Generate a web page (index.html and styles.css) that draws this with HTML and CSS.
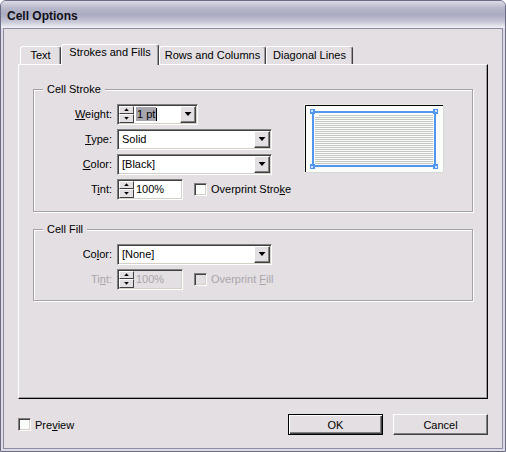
FILE: index.html
```html
<!DOCTYPE html>
<html lang="en">
<head>
    <meta charset="UTF-8">
    <title>Cell Options</title>
    <link rel="stylesheet" href="styles.css">
</head>
<body>
    <div class="window">
        <div class="titlebar">Cell Options</div>
        <div class="frame">
            <div class="client">
                <div class="tabs">
                    <div class="tab tab-text">Text</div>
                    <div class="tab tab-strokes active">Strokes and Fills</div>
                    <div class="tab tab-rows">Rows and Columns</div>
                    <div class="tab tab-diagonal">Diagonal Lines</div>
                </div>

                <div class="panel">
                    <!-- Cell Stroke -->
                    <div class="group stroke">
                        <span class="group-title">Cell Stroke</span>
                        <div class="fields">
                            <div class="row">
                                <span class="lbl"><u>W</u>eight:</span>
                                <div class="numfield combo">
                                    <div class="spin">
                                        <div class="spin-btn up"></div>
                                        <div class="spin-btn down"></div>
                                    </div>
                                    <div class="num"><span class="sel">1 pt</span><span class="caret"></span></div>
                                    <div class="drop"></div>
                                </div>
                            </div>
                            <div class="row">
                                <span class="lbl"><u>T</u>ype:</span>
                                <div class="select">
                                    <div class="val">Solid</div>
                                    <div class="drop"></div>
                                </div>
                            </div>
                            <div class="row">
                                <span class="lbl"><u>C</u>olor:</span>
                                <div class="select">
                                    <div class="val">[Black]</div>
                                    <div class="drop"></div>
                                </div>
                            </div>
                            <div class="row">
                                <span class="lbl">T<u>i</u>nt:</span>
                                <div class="numfield tint">
                                    <div class="spin">
                                        <div class="spin-btn up"></div>
                                        <div class="spin-btn down"></div>
                                    </div>
                                    <div class="num">100%</div>
                                </div>
                                <label class="check">
                                    <span class="box"></span>
                                    <span>Overprint Stro<u>k</u>e</span>
                                </label>
                            </div>
                        </div>
                        <div class="preview">
                            <svg width="140" height="69" viewBox="0 0 140 69">
                                <rect x="0" y="0" width="140" height="69" fill="#fbfdfb"/>
                                <path d="M0.5 69V0.5H140" stroke="#e9ebe9" fill="none"/>
                                <path d="M1.5 68V1.5H139" stroke="#000" fill="none"/>
                                <path d="M139.5 1V68.5H1" stroke="#d6dad6" fill="none"/>
                                <path stroke="#c4c8c4" stroke-width="1" fill="none"
                                    d="M15 11.5H129M11 13.5H129M11 15.5H129M11 17.5H129M11 19.5H129M11 21.5H129M11 23.5H129M11 25.5H129M11 27.5H129M11 29.5H129M11 31.5H129M11 33.5H129M11 35.5H129M11 37.5H129M11 39.5H129M11 41.5H129M11 43.5H129M11 45.5H129M11 47.5H129M11 49.5H129M11 51.5H129M11 53.5H129M11 55.5H129M11 57.5H129M11 59.5H129"/>
                                <rect x="9" y="8" width="122" height="54" fill="none" stroke="#5197ee" stroke-width="2"/>
                                <g fill="#5197ee">
                                    <rect x="6" y="5" width="5" height="5"/>
                                    <rect x="129" y="5" width="5" height="5"/>
                                    <rect x="6" y="60" width="5" height="5"/>
                                    <rect x="129" y="60" width="5" height="5"/>
                                </g>
                                <g fill="#cfe2fb">
                                    <rect x="7" y="6" width="2" height="2"/>
                                    <rect x="131" y="6" width="2" height="2"/>
                                    <rect x="7" y="62" width="2" height="2"/>
                                    <rect x="131" y="62" width="2" height="2"/>
                                </g>
                            </svg>
                        </div>
                    </div>

                    <!-- Cell Fill -->
                    <div class="group fill">
                        <span class="group-title">Cell Fill</span>
                        <div class="fields">
                            <div class="row">
                                <span class="lbl">Co<u>l</u>or:</span>
                                <div class="select">
                                    <div class="val">[None]</div>
                                    <div class="drop"></div>
                                </div>
                            </div>
                            <div class="row">
                                <span class="lbl disabled">Ti<u>n</u>t:</span>
                                <div class="numfield tint disabled">
                                    <div class="spin">
                                        <div class="spin-btn up"></div>
                                        <div class="spin-btn down"></div>
                                    </div>
                                    <div class="num">100%</div>
                                </div>
                                <label class="check disabled">
                                    <span class="box"></span>
                                    <span>Overprint <u>F</u>ill</span>
                                </label>
                            </div>
                        </div>
                    </div>
                </div>

                <div class="footer">
                    <label class="check">
                        <span class="box"></span>
                        <span>Pre<u>v</u>iew</span>
                    </label>
                    <button class="btn default">OK</button>
                    <button class="btn">Cancel</button>
                </div>
            </div>
        </div>
    </div>
</body>
</html>
```

FILE: styles.css
```css
* {
    margin: 0;
    padding: 0;
    box-sizing: border-box;
}

body {
    font-family: "Liberation Sans", Arial, sans-serif;
    font-size: 11px;
    color: #000;
    background: #fff;
}

u {
    text-decoration: underline;
    text-underline-offset: 1px;
}

.window {
    width: 506px;
    height: 452px;
    border: 1px solid #6d6c87;
    border-radius: 6px 6px 0 0;
    background: #dcdae4;
    display: flex;
    flex-direction: column;
    overflow: hidden;
}

.titlebar {
    height: 27px;
    padding: 8px 0 0 6px;
    font-size: 12px;
    font-weight: bold;
    color: #101018;
    background: linear-gradient(#dcdce6 0%, #b9b9cc 25%, #aaaac1 50%, #c4c4d5 75%, #f2f2f6 100%);
}

.frame {
    flex: 1;
    display: flex;
    padding: 0 2px 2px;
}

.client {
    flex: 1;
    display: flex;
    flex-direction: column;
    border: 1px solid #8d8ba5;
    background: #e3dfe3;
    padding: 15px 14px 0;
}

/* Tabs */
.tabs {
    display: flex;
    align-items: flex-end;
    height: 20px;
    padding-left: 2px;
}

.tab {
    height: 18px;
    border: 1px solid;
    border-bottom: 0;
    border-color: #fff #404040 transparent #fff;
    border-radius: 3px 3px 0 0;
    box-shadow: inset -1px 0 0 #a09ca0;
    text-align: center;
    line-height: 13px;
    padding-top: 2px;
}

.tab.active {
    position: relative;
    z-index: 1;
    height: 21px;
    margin-bottom: -1px;
    background: #e3dfe3;
    padding-top: 1px;
}

.tab-text { width: 41px; }
.tab-strokes { width: 98px; }
.tab-rows { width: 107px; }
.tab-diagonal { width: 87px; }

.panel {
    height: 335px;
    border: 1px solid;
    border-color: #fff #000 #000 #fff;
    box-shadow: inset -1px -1px 0 #a09ca0;
    padding: 24px 14px 0;
}

/* Group boxes */
.group {
    position: relative;
    border: 1px solid #a5a1a5;
    box-shadow: inset 1px 1px 0 #fff, 1px 1px 0 #fff;
    padding-top: 13px;
}

.group-title {
    position: absolute;
    top: -7px;
    left: 9px;
    padding: 0 4px;
    line-height: 13px;
    background: #e3dfe3;
}

.stroke {
    height: 123px;
    display: flex;
}

.fill {
    height: 72px;
    margin-top: 17px;
}

.fields {
    display: flex;
    flex-direction: column;
    gap: 3px;
}

.row {
    display: flex;
    align-items: center;
    height: 22px;
}

.lbl {
    width: 78px;
    margin-right: 5px;
    text-align: right;
}

/* Fields */
.numfield,
.select {
    display: flex;
    height: 21px;
    background: #fff;
    border: 1px solid;
    border-color: #808080 #fff #fff #808080;
    box-shadow: inset 1px 1px 0 #404040, inset -1px -1px 0 #d4d0c8;
    padding: 1px 1px 1px 1px;
}

.combo { width: 81px; }
.tint { width: 66px; }
.select { width: 155px; }

.spin {
    width: 15px;
    display: flex;
    flex-direction: column;
    background: #e3dfe3;
}

.spin-btn {
    flex: 1;
    display: flex;
    align-items: center;
    justify-content: center;
    border: 1px solid;
    border-color: #fff #404040 #404040 #fff;
}

.spin-btn::after {
    content: "";
    width: 5px;
    height: 3px;
    background: #000;
}

.spin-btn.up::after {
    clip-path: polygon(50% 0, 100% 100%, 0 100%);
}

.spin-btn.down::after {
    clip-path: polygon(0 0, 100% 0, 50% 100%);
}

.num {
    flex: 1;
    display: flex;
    align-items: center;
    padding-left: 2px;
}

.sel {
    background: #a7a6ae;
    padding: 1px 1px;
}

.caret {
    width: 1px;
    height: 13px;
    background: #000;
}

.val {
    flex: 1;
    display: flex;
    align-items: center;
    padding-left: 3px;
}

.drop {
    width: 16px;
    display: flex;
    align-items: center;
    justify-content: center;
    background: #e3dfe3;
    border: 1px solid;
    border-color: #fff #404040 #404040 #fff;
    box-shadow: inset -1px -1px 0 #808080;
}

.drop::after {
    content: "";
    width: 7px;
    height: 4px;
    background: #000;
    clip-path: polygon(0 0, 100% 0, 50% 100%);
}

/* Checkboxes */
.check {
    display: flex;
    align-items: center;
    gap: 4px;
}

.row .check {
    margin-left: 11px;
}

.box {
    width: 13px;
    height: 13px;
    background: #fbfdfb;
    border: 1px solid;
    border-color: #808080 #fff #fff #808080;
    box-shadow: inset 1px 1px 0 #404040, inset -1px -1px 0 #d4d0c8;
}

.disabled {
    color: #a9a5a9;
}

.numfield.disabled {
    background: #e3dfe3;
}

.check.disabled .box {
    background: #e3dfe3;
}

.preview {
    width: 140px;
    height: 69px;
    margin: 1px 28px 0 auto;
}

.preview svg {
    display: block;
}

/* Footer */
.footer {
    display: flex;
    align-items: center;
    height: 21px;
    margin-top: 15px;
    gap: 10px;
}

.btn {
    width: 95px;
    height: 21px;
    font: inherit;
    color: #000;
    background: #e3dfe3;
    border: 1px solid;
    border-color: #fff #404040 #404040 #fff;
    box-shadow: inset -1px -1px 0 #808080;
}

.btn.default {
    margin-left: auto;
    border-color: #000;
    box-shadow: inset 1px 1px 0 #fff, inset -1px -1px 0 #404040, inset -2px -2px 0 #808080;
}
```
